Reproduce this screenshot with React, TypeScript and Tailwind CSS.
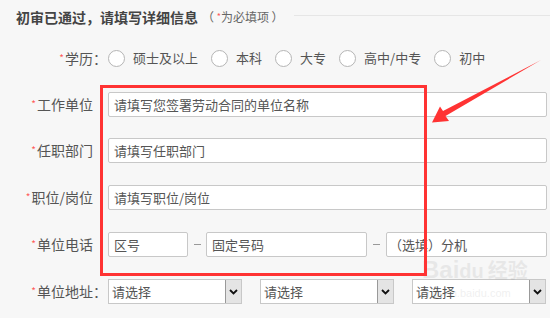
import React from "react";

const Star = () => (
  <span className="text-[#ff5b5b] text-[10px] relative -top-[2px] mr-[1px]">*</span>
);

const Radio = ({ label, last }: { label: string; last?: boolean }) => (
  <div className={`flex items-center ${last ? "" : "mr-[13px]"}`}>
    <span className="w-[17px] h-[17px] rounded-full border border-[#b5b5b5] bg-white" />
    <span className="ml-[8px]">{label}</span>
  </div>
);

const Field = ({ label, placeholder }: { label: string; placeholder: string }) => (
  <div className="flex items-center h-[25px]">
    <label className="w-[108px] text-right pr-[15px] text-[14px] text-[#555]">
      <Star />
      {label}
    </label>
    <input
      placeholder={placeholder}
      className="w-[439px] h-[25px] bg-white border border-[#c8c8c8] rounded-[2px] px-[5px] text-[13px] placeholder:text-[#555] outline-none"
    />
  </div>
);

const Select = () => (
  <div className="w-[134px] h-[25px] bg-white border border-[#c8c8c8] flex items-stretch">
    <span className="flex-1 pl-[3px] leading-[23px] text-[13px] text-[#555]">请选择</span>
    <span className="w-[16px] bg-[#e4e4e4] border-l border-[#999] flex items-center justify-center">
      <svg width="9" height="6" viewBox="0 0 9 6">
        <path d="M1 1l3.5 3.5L8 1" fill="none" stroke="#111" strokeWidth="1.8" />
      </svg>
    </span>
  </div>
);

const App = () => {
  return (
    <div className="relative w-[550px] h-[318px] overflow-hidden bg-[#f7f7f7] text-[13px] text-[#555] font-['Microsoft_YaHei','Noto_Sans_CJK_SC',sans-serif]">
      {/* title */}
      <div className="flex items-center h-[34px] pl-[16px]">
        <h2 className="text-[14px] font-bold text-[#444]">初审已通过，请填写详细信息</h2>
        <span className="ml-[4px] text-[12px] text-[#666]">
          （ <span className="text-[#ff5b5b] text-[9px] relative -top-[2px]">*</span>为必填项 ）
        </span>
        <div className="flex-1 ml-[10px] border-t border-[#e6e6e6] relative -top-[2px]" />
      </div>

      {/* education */}
      <div className="flex items-center h-[24px] mt-[12px]">
        <label className="w-[108px] text-right text-[14px] pr-[1px]">
          <Star />
          学历：
        </label>
        <Radio label="硕士及以上" />
        <Radio label="本科" />
        <Radio label="大专" />
        <Radio label="高中/中专" />
        <Radio label="初中" last />
      </div>

      <div className="flex flex-col mt-[22px]">
        <Field label="工作单位" placeholder="请填写您签署劳动合同的单位名称" />
        <div className="mt-[21px]">
          <Field label="任职部门" placeholder="请填写任职部门" />
        </div>
        <div className="mt-[22px]">
          <Field label="职位/岗位" placeholder="请填写职位/岗位" />
        </div>

        {/* phone */}
        <div className="flex items-center h-[25px] mt-[22px]">
          <label className="w-[108px] text-right pr-[15px] text-[14px]">
            <Star />
            单位电话
          </label>
          <input
            placeholder="区号"
            className="w-[80px] h-[25px] bg-white border border-[#c8c8c8] rounded-[2px] px-[5px] placeholder:text-[#555]"
          />
          <span className="w-[18px] flex justify-center">
            <span className="w-[7px] border-t border-[#999]" />
          </span>
          <input
            placeholder="固定号码"
            className="w-[161px] h-[25px] bg-white border border-[#c8c8c8] rounded-[2px] px-[5px] placeholder:text-[#555]"
          />
          <span className="w-[19px] flex justify-center">
            <span className="w-[7px] border-t border-[#999]" />
          </span>
          <input
            placeholder="（选填）分机"
            className="w-[161px] h-[25px] bg-white border border-[#c8c8c8] rounded-[2px] px-[2px] placeholder:text-[#555]"
          />
        </div>

        {/* address */}
        <div className="flex items-center h-[25px] mt-[22px]">
          <label className="w-[108px] text-right text-[14px] pr-[1px]">
            <Star />
            单位地址：
          </label>
          <Select />
          <div className="ml-[18px]">
            <Select />
          </div>
          <div className="ml-[18px]">
            <Select />
          </div>
        </div>
      </div>

      {/* watermark */}
      <div className="absolute left-[422px] top-[258px] pointer-events-none text-[#000] opacity-[0.06] leading-none">
        <div className="text-[24px] font-bold font-['Liberation_Sans',sans-serif]">
          Bai<span className="text-[20px]">du</span>
          <span className="text-[20px] font-['Noto_Sans_CJK_SC',sans-serif] ml-[4px]">经验</span>
        </div>
        <div className="text-[11px] mt-[6px] font-['Liberation_Sans',sans-serif]">jingyan.baidu.com</div>
      </div>

      {/* annotation */}
      <svg className="absolute inset-0 pointer-events-none" width="550" height="318" viewBox="0 0 550 318">
        <rect x="101.5" y="86.5" width="324" height="188" fill="none" stroke="#ff3333" strokeWidth="3" />
        <polygon
          points="541,60 445.5,116 449,121 432,122.5 440,106.5 443,111"
          fill="#ff3333"
        />
      </svg>
    </div>
  );
};

export default App;
